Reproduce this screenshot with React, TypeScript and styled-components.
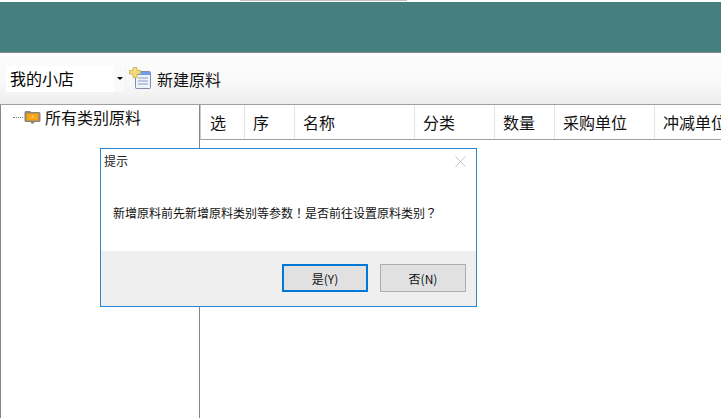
import React from "react";
import styled, { createGlobalStyle } from "styled-components";

const GlobalStyle = createGlobalStyle`
  html, body {
    margin: 0;
    padding: 0;
    background: #fff;
    overflow: hidden;
  }
  body {
    font-family: "Noto Sans CJK SC", "Liberation Sans", sans-serif;
    color: #000;
  }
`;

const columns = [
  { label: "选", width: 44 },
  { label: "序", width: 50 },
  { label: "名称", width: 120 },
  { label: "分类", width: 80 },
  { label: "数量", width: 60 },
  { label: "采购单位", width: 100 },
  { label: "冲减单位", width: 100 },
];

const App: React.FC = () => {
  return (
    <Page>
      <GlobalStyle />
      <TopStrip>
        <TopTab />
      </TopStrip>
      <Banner />
      <Toolbar>
        <ShopSelect>
          <span>我的小店</span>
          <SelectButton>
            <SelectArrow />
          </SelectButton>
        </ShopSelect>
        <NewButton>
          <NewIcon />
          <span>新建原料</span>
        </NewButton>
      </Toolbar>
      <Body>
        <TreePanel>
          <TreeRow>
            <TreeDots />
            <FolderIcon />
            <span>所有类别原料</span>
          </TreeRow>
        </TreePanel>
        <TablePanel>
          <TableHead>
            {columns.map((c) => (
              <HeadCell key={c.label} w={c.width}>
                {c.label}
              </HeadCell>
            ))}
          </TableHead>
        </TablePanel>
      </Body>
      <Dialog>
        <DialogTitle>
          <TitleText>提示</TitleText>
          <CloseIcon />
        </DialogTitle>
        <DialogMessage>
          新增原料前先新增原料类别等参数<Punct>！</Punct>是否前往设置原料类别<Punct>？</Punct>
        </DialogMessage>
        <DialogFooter>
          <DialogButton primary>是(Y)</DialogButton>
          <DialogButton>否(N)</DialogButton>
        </DialogFooter>
      </Dialog>
    </Page>
  );
};
export default App;

const NewIcon = () => (
  <svg width="22" height="23" viewBox="0 0 22 23">
    <rect x="6.500" y="4.500" width="15" height="17" rx="1" fill="#eef3fa" stroke="#7d8ea6" />
    <rect x="7" y="5" width="14" height="3" fill="#6f9be8" />
    <path d="M9 11h10M9 14h10M9 17h10" stroke="#a9bbd6" strokeWidth="1.4" />
    <path
      d="M4 .5h4v3h3.500V7H8v3.500H4V7H.5V3.500H4z"
      fill="#f2dc7c"
      stroke="#c9ae4a"
      strokeWidth="0.8"
    />
  </svg>
);

const FolderIcon = () => (
  <svg width="17" height="15" viewBox="0 0 17 15">
    <path
      d="M2 1h4l1 1h8a1.500 1.500 0 0 1 1.500 1.500v7a1.500 1.500 0 0 1-1.500 1.500h-4l-2.500 2-2.500-2H2A1.500 1.500 0 0 1 .5 10.500v-8A1.500 1.500 0 0 1 2 1z"
      fill="#8b8678"
    />
    <rect x="2.500" y="3.500" width="12" height="7" fill="#fba414" />
    <path d="M8.500 5l1.500 2.500H7z" fill="#ffd77a" />
  </svg>
);

const CloseIcon = () => (
  <CloseSvg width="11" height="11" viewBox="0 0 11 11">
    <path d="M.5.5l10 10M10.500.5l-10 10" stroke="#c4c4c4" strokeWidth="1" fill="none" />
  </CloseSvg>
);

const Page = styled.div`
  position: relative;
  width: 721px;
  height: 418px;
  overflow: hidden;
  display: flex;
  flex-direction: column;
`;
const TopStrip = styled.div`
  height: 2px;
  background: #fff;
  padding-left: 240px;
`;
const TopTab = styled.div`
  width: 167px;
  height: 1px;
  border: 1px solid #c4c4c4;
  border-top: none;
  box-sizing: border-box;
`;
const Banner = styled.div`
  height: 50px;
  background: #45807f;
  border-bottom: 1px solid #8a8a8a;
`;
const Toolbar = styled.div`
  height: 51px;
  display: flex;
  align-items: center;
  padding: 0 0 0 6px;
  background: linear-gradient(#fdfdfd, #f8f8f8 60%, #eeeeee);
  box-sizing: border-box;
`;
const ShopSelect = styled.div`
  width: 120px;
  height: 26px;
  box-sizing: border-box;
  background: #fff;
  display: flex;
  align-items: stretch;
  justify-content: space-between;
  padding-left: 4px;
  line-height: 24px;
  font-size: 16px;
`;
const SelectButton = styled.div`
  width: 12px;
  background: #fafafa;
  display: flex;
  align-items: center;
  justify-content: center;
  border-right: 1px solid #f2f2f2;
  box-sizing: border-box;
`;
const SelectArrow = styled.i`
  width: 0;
  height: 0;
  border-left: 3px solid transparent;
  border-right: 3px solid transparent;
  border-top: 3px solid #000;
`;
const NewButton = styled.div`
  display: flex;
  align-items: center;
  gap: 6px;
  margin-left: 3px;
  font-size: 16px;
  color: #111;
`;
const Body = styled.div`
  flex: 1;
  display: flex;
  border-top: 1px solid #a0a0a0;
  min-height: 0;
`;
const TreePanel = styled.div`
  width: 200px;
  box-sizing: border-box;
  border-left: 1px solid #85858f;
  border-right: 1px solid #85858f;
  padding: 2px 0 0 12px;
  flex-shrink: 0;
`;
const TreeRow = styled.div`
  display: flex;
  align-items: center;
  height: 20px;
  font-size: 16px;
  color: #111;
  gap: 4px;
`;
const TreeDots = styled.i`
  width: 10px;
  margin-right: -3px;
  border-top: 1px dotted #777;
`;
const TablePanel = styled.div`
  flex: 1;
  min-width: 0;
`;
const TableHead = styled.div`
  display: flex;
  height: 35px;
  box-sizing: border-box;
  border-left: 1px solid #c8c8c8;
  border-bottom: 1px solid #a0a0a0;
  overflow: hidden;
`;
const HeadCell = styled.div<{ w: number }>`
  width: ${(props) => props.w}px;
  flex-shrink: 0;
  box-sizing: border-box;
  padding-left: 8px;
  display: flex;
  align-items: center;
  font-size: 16px;
  color: #111;
  white-space: nowrap;
  border-right: 1px solid #e3e3e3;
  &:first-child {
    padding-left: 9px;
  }
`;
const Dialog = styled.div`
  position: absolute;
  left: 100px;
  top: 148px;
  width: 377px;
  height: 159px;
  box-sizing: border-box;
  border: 1px solid #2a86d0;
  background: #fff;
  display: flex;
  flex-direction: column;
`;
const DialogTitle = styled.div`
  height: 24px;
  display: flex;
  align-items: center;
  justify-content: space-between;
  padding: 0 10px 0 3px;
  font-size: 12px;
  color: #222;
`;
const TitleText = styled.span`
  margin-bottom: 2px;
`;
const CloseSvg = styled.svg`
  display: block;
`;
const DialogMessage = styled.div`
  flex: 1;
  padding: 0 0 0 12px;
  display: flex;
  align-items: center;
  font-size: 12px;
  color: #111;
  white-space: nowrap;
`;
const Punct = styled.span`
  font-family: "Noto Sans CJK TC", sans-serif;
`;
const DialogFooter = styled.div`
  height: 55px;
  background: #efefef;
  display: flex;
  justify-content: flex-end;
  align-items: flex-start;
  gap: 12px;
  padding: 13px 10px 0 0;
  box-sizing: border-box;
`;
const DialogButton = styled.div<{ primary?: boolean }>`
  width: 86px;
  height: 28px;
  box-sizing: border-box;
  background: #e1e1e1;
  border: ${(props) => (props.primary ? "2px solid #0078d7" : "1px solid #adadad")};
  display: flex;
  align-items: center;
  justify-content: center;
  font-size: 12px;
  color: #111;
`;
